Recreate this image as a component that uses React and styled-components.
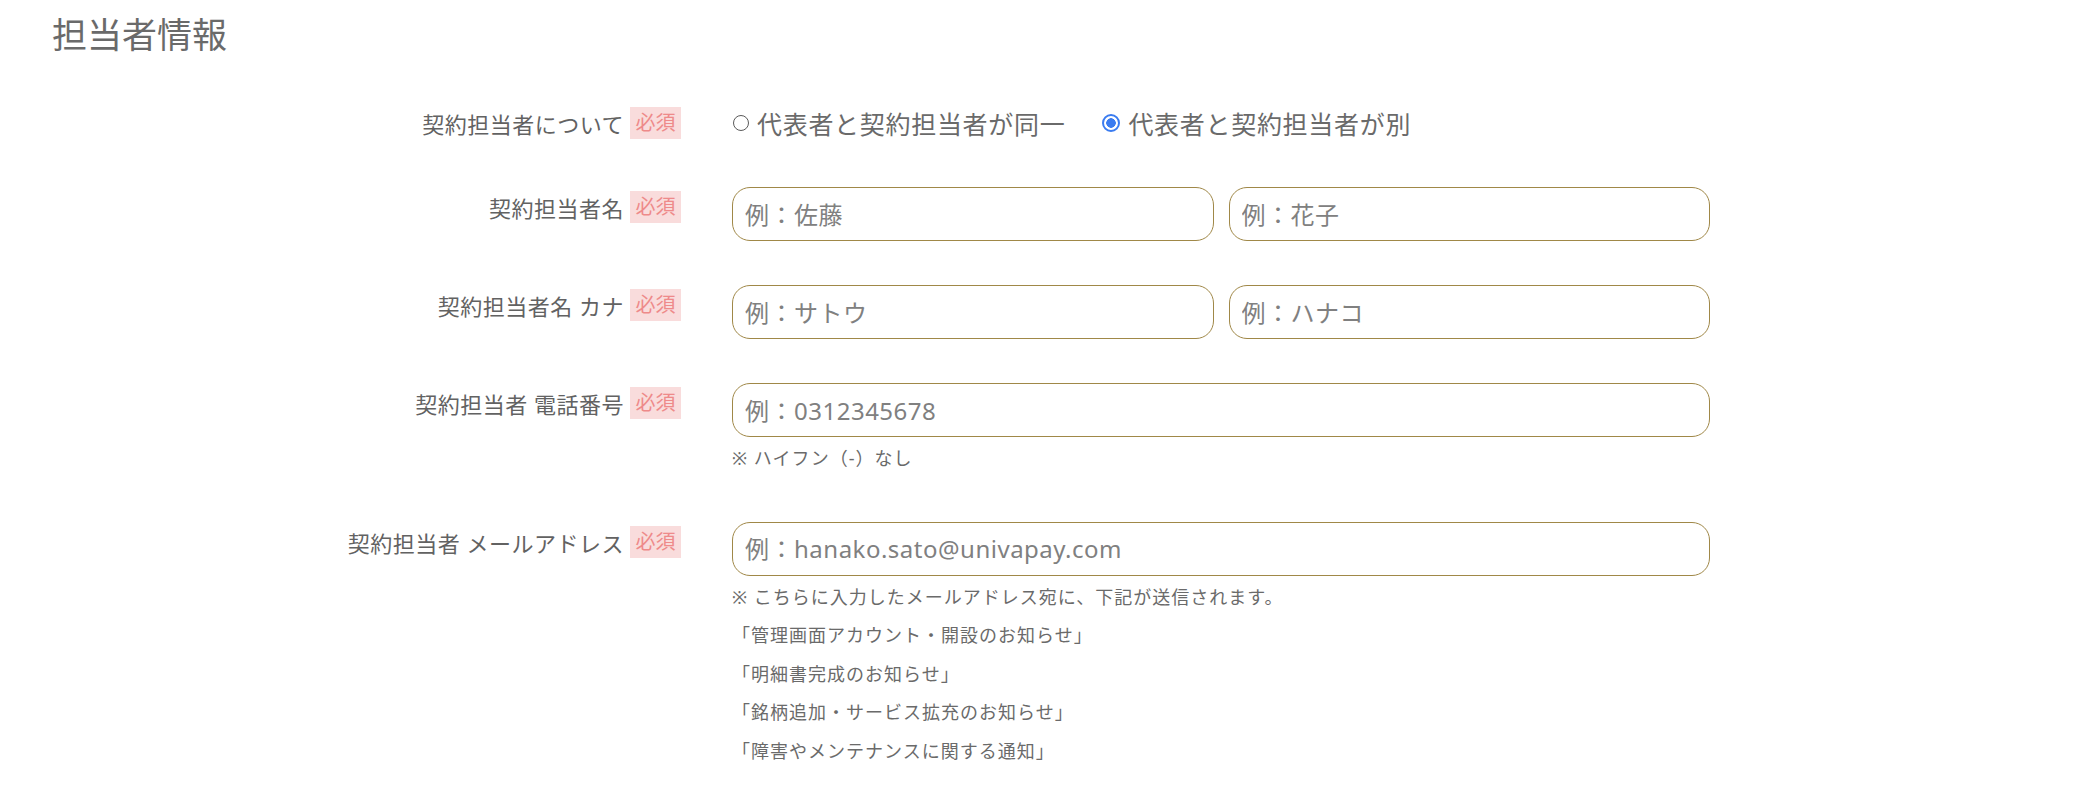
import React from "react";
import styled, { createGlobalStyle } from "styled-components";

const GlobalStyle = createGlobalStyle`
  html, body {
    margin: 0;
    padding: 0;
    background: #ffffff;
  }
  body {
    font-family: "Noto Sans", "Noto Sans CJK JP", sans-serif;
    color: #5f5f5f;
  }
`;

const Page = styled.div`
  padding: 9px 0 24px 52px;
`;

const Title = styled.h2`
  margin: 0;
  font-size: 35px;
  font-weight: 400;
  line-height: 1.5;
  color: #6a6a6a;
`;

const Form = styled.div`
  display: grid;
  grid-template-columns: 629px 978px;
  column-gap: 51px;
  row-gap: 44px;
  margin-top: 41.5px;
  align-items: start;
`;

const LabelCell = styled.div`
  display: flex;
  justify-content: flex-end;
  align-items: center;
  gap: 6px;
  height: 40px;
`;

const LabelText = styled.span`
  font-size: 22px;
  letter-spacing: 0.5px;
  color: #626262;
  white-space: nowrap;
`;

const Badge = styled.span`
  display: inline-flex;
  align-items: center;
  height: 32px;
  padding: 0 5.5px;
  background: #f9dcdc;
  color: #ee8a8a;
  font-size: 20px;
  line-height: 1;
`;

const RadioGroup = styled.div`
  display: flex;
  align-items: center;
  gap: 37px;
  height: 40px;
`;

const RadioOption = styled.label`
  display: flex;
  align-items: center;
  gap: 8px;
  font-size: 25px;
  letter-spacing: 0.7px;
  color: #6a6a6a;
  cursor: pointer;
`;

const RadioDot = styled.span`
  box-sizing: border-box;
  flex: none;
  border-radius: 50%;
  width: ${(p) => (p.$checked ? "18px" : "16px")};
  height: ${(p) => (p.$checked ? "18px" : "16px")};
  margin-left: ${(p) => (p.$checked ? "0" : "1px")};
  border: ${(p) => (p.$checked ? "2px solid #3b7cf0" : "1.7px solid #5a5a5a")};
  background: ${(p) =>
    p.$checked
      ? "radial-gradient(circle, #3b7cf0 0 4.5px, #ffffff 5px)"
      : "#ffffff"};
`;

const Field = styled.div`
  display: flex;
  flex-direction: column;
`;

const Pair = styled.div`
  display: grid;
  grid-template-columns: 1fr 1fr;
  column-gap: 15px;
`;

const TextInput = styled.input`
  box-sizing: border-box;
  width: 100%;
  height: 54px;
  margin: 0;
  padding: 0 12px;
  border: 1px solid #a08848;
  border-radius: 18px;
  background: #ffffff;
  font-family: "Noto Sans", "Noto Sans CJK JP", sans-serif;
  font-size: 24px;
  letter-spacing: 0.5px;
  color: #444444;
  outline: none;

  &::placeholder {
    color: #808080;
    opacity: 1;
  }
`;

const Notes = styled.div`
  margin-top: 2px;
  display: flex;
  flex-direction: column;
`;

const NoteLine = styled.div`
  font-size: 18px;
  letter-spacing: 1px;
  line-height: 38.5px;
  color: #6a6a6a;
  white-space: nowrap;
`;

const Label = ({ children }) => (
  <LabelCell>
    <LabelText>{children}</LabelText>
    <Badge>必須</Badge>
  </LabelCell>
);

const mailItems = [
  "※ こちらに入力したメールアドレス宛に、下記が送信されます。",
  "「管理画面アカウント・開設のお知らせ」",
  "「明細書完成のお知らせ」",
  "「銘柄追加・サービス拡充のお知らせ」",
  "「障害やメンテナンスに関する通知」",
];

export default function App() {
  return (
    <>
      <GlobalStyle />
      <Page>
        <Title>担当者情報</Title>
        <Form>
          <Label>契約担当者について</Label>
          <RadioGroup>
            <RadioOption>
              <RadioDot />
              代表者と契約担当者が同一
            </RadioOption>
            <RadioOption>
              <RadioDot $checked />
              代表者と契約担当者が別
            </RadioOption>
          </RadioGroup>

          <Label>契約担当者名</Label>
          <Pair>
            <TextInput placeholder="例：佐藤" />
            <TextInput placeholder="例：花子" />
          </Pair>

          <Label>契約担当者名 カナ</Label>
          <Pair>
            <TextInput placeholder="例：サトウ" />
            <TextInput placeholder="例：ハナコ" />
          </Pair>

          <Label>契約担当者 電話番号</Label>
          <Field>
            <TextInput placeholder="例：0312345678" />
            <Notes>
              <NoteLine>※ ハイフン（-）なし</NoteLine>
            </Notes>
          </Field>

          <Label>契約担当者 メールアドレス</Label>
          <Field>
            <TextInput placeholder="例：hanako.sato@univapay.com" />
            <Notes>
              {mailItems.map((t) => (
                <NoteLine key={t}>{t}</NoteLine>
              ))}
            </Notes>
          </Field>
        </Form>
      </Page>
    </>
  );
}
